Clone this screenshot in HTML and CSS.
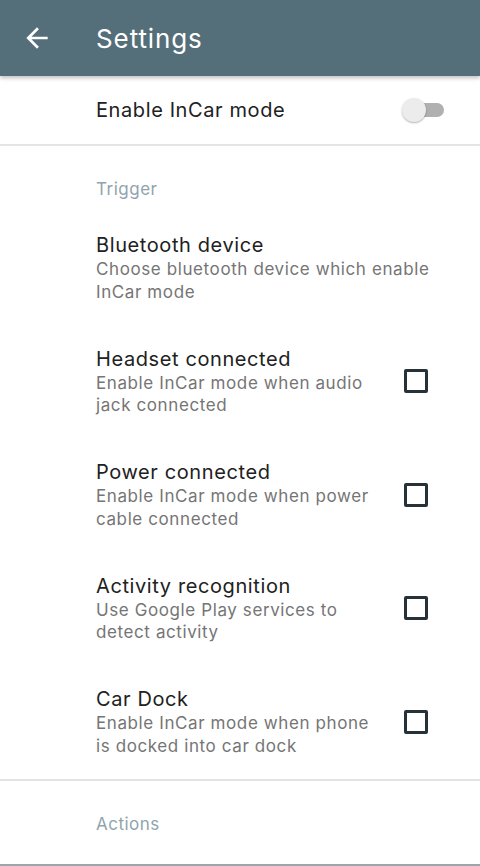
FILE: index.html
```html
<!DOCTYPE html>
<html>
<head>
<meta charset="utf-8">
<link rel="stylesheet" href="styles.css">
</head>
<body>
<div class="screen">
  <header class="appbar">
    <svg class="back" viewBox="0 0 24 24" width="32" height="32"><path fill="#fff" d="M20 11H7.83l5.59-5.59L12 4l-8 8 8 8 1.41-1.41L7.83 13H20v-2z"/></svg>
    <div class="title">Settings</div>
  </header>
  <div class="switch-row">
    <div class="label">Enable InCar mode</div>
    <div class="switch"><div class="track"></div><div class="thumb"></div></div>
  </div>
  <div class="divider"></div>
  <div class="category">Trigger</div>
  <div class="pref">
    <div class="text wide">
      <div class="ptitle">Bluetooth device</div>
      <div class="psub">Choose bluetooth device which enable InCar mode</div>
    </div>
  </div>
  <div class="pref">
    <div class="text">
      <div class="ptitle">Headset connected</div>
      <div class="psub">Enable InCar mode when audio jack connected</div>
    </div>
    <div class="check"></div>
  </div>
  <div class="pref">
    <div class="text">
      <div class="ptitle">Power connected</div>
      <div class="psub">Enable InCar mode when power cable connected</div>
    </div>
    <div class="check"></div>
  </div>
  <div class="pref">
    <div class="text">
      <div class="ptitle">Activity recognition</div>
      <div class="psub">Use Google Play services to detect activity</div>
    </div>
    <div class="check"></div>
  </div>
  <div class="pref">
    <div class="text">
      <div class="ptitle">Car Dock</div>
      <div class="psub">Enable InCar mode when phone is docked into car dock</div>
    </div>
    <div class="check"></div>
  </div>
  <div class="divider"></div>
  <div class="category">Actions</div>
  <div class="bottomline"></div>
</div>
</body>
</html>
```
FILE: styles.css
```css
* { box-sizing: border-box; }
html, body { margin: 0; padding: 0; background: #fff; }
body { font-family: Inter, Roboto, sans-serif; }
.screen { width: 480px; height: 866px; overflow: hidden; display: flex; flex-direction: column; }
.appbar {
  height: 76px; background: #546e7a; display: flex; align-items: center;
  box-shadow: 0 2px 4px rgba(0,0,0,0.25); position: relative; z-index: 1; flex-shrink: 0;
}
.back { margin-left: 21px; }
.title { color: #fff; font-size: 26px; margin-left: 43px; letter-spacing: 0.9px; }
.switch-row { height: 68px; display: flex; align-items: center; padding-left: 96px; padding-right: 36px; flex-shrink: 0; }
.label { flex: 1; font-size: 20px; color: #212121; letter-spacing: 0.6px; }
.switch { position: relative; width: 42px; height: 24px; }
.track { position: absolute; left: 4px; right: 0; top: 5px; height: 14px; border-radius: 7px; background: #b0b0b0; }
.thumb { position: absolute; left: 0; top: 0; width: 24px; height: 24px; border-radius: 50%; background: #ececec; box-shadow: 0 1px 2px rgba(0,0,0,0.3); }
.divider { height: 2px; background: #e4e4e4; flex-shrink: 0; }
.category { font-size: 17px; line-height: 20px; color: #90a4ae; padding-left: 96px; padding-top: 33px; height: 65px; flex-shrink: 0; letter-spacing: 0.5px; }
.pref { display: flex; align-items: center; padding-left: 96px; padding-right: 52px; height: 113.5px; flex-shrink: 0; }
.text { flex: 1; padding-right: 20px; }
.text.wide { padding-right: 0; margin-right: -14px; }
.ptitle { font-size: 20px; color: #212121; line-height: 26px; letter-spacing: 0.6px; }
.psub { font-size: 17px; color: #757575; line-height: 22.5px; letter-spacing: 0.6px; }
.check { width: 24px; height: 24px; border: 3px solid #263238; border-radius: 2px; flex-shrink: 0; }
.bottomline { margin-top: auto; height: 2px; background: #9aa8ae; flex-shrink: 0; }
```
